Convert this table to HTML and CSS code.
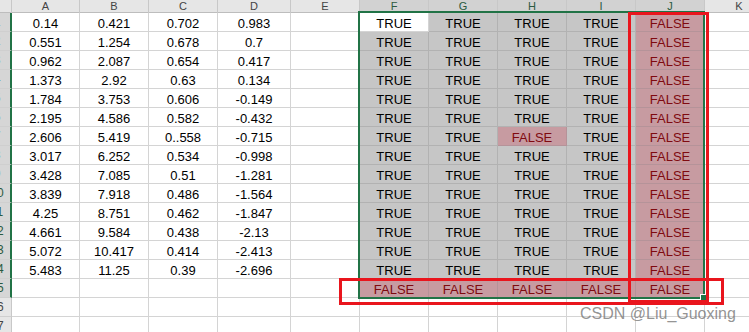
FILE: index.html
```html
<!DOCTYPE html>
<html>
<head>
<meta charset="utf-8">
<link rel="stylesheet" href="styles.css">
</head>
<body>
<div class="wrap">
  <div class="row hdr"><div></div><div>A</div><div>B</div><div>C</div><div>D</div><div>E</div><div class="hs">F</div><div class="hs">G</div><div class="hs">H</div><div class="hs">I</div><div class="hs">J</div><div>K</div></div>
  <div class="row"><div class="rh rs"><span>1</span></div><div>0.14</div><div>0.421</div><div>0.702</div><div>0.983</div><div></div><div class="a">TRUE</div><div class="g">TRUE</div><div class="g">TRUE</div><div class="g">TRUE</div><div class="p">FALSE</div><div></div></div>
  <div class="row"><div class="rh rs"><span>2</span></div><div>0.551</div><div>1.254</div><div>0.678</div><div>0.7</div><div></div><div class="g">TRUE</div><div class="g">TRUE</div><div class="g">TRUE</div><div class="g">TRUE</div><div class="p">FALSE</div><div></div></div>
  <div class="row"><div class="rh rs"><span>3</span></div><div>0.962</div><div>2.087</div><div>0.654</div><div>0.417</div><div></div><div class="g">TRUE</div><div class="g">TRUE</div><div class="g">TRUE</div><div class="g">TRUE</div><div class="p">FALSE</div><div></div></div>
  <div class="row"><div class="rh rs"><span>4</span></div><div>1.373</div><div>2.92</div><div>0.63</div><div>0.134</div><div></div><div class="g">TRUE</div><div class="g">TRUE</div><div class="g">TRUE</div><div class="g">TRUE</div><div class="p">FALSE</div><div></div></div>
  <div class="row"><div class="rh rs"><span>5</span></div><div>1.784</div><div>3.753</div><div>0.606</div><div>-0.149</div><div></div><div class="g">TRUE</div><div class="g">TRUE</div><div class="g">TRUE</div><div class="g">TRUE</div><div class="p">FALSE</div><div></div></div>
  <div class="row"><div class="rh rs"><span>6</span></div><div>2.195</div><div>4.586</div><div>0.582</div><div>-0.432</div><div></div><div class="g">TRUE</div><div class="g">TRUE</div><div class="g">TRUE</div><div class="g">TRUE</div><div class="p">FALSE</div><div></div></div>
  <div class="row"><div class="rh rs"><span>7</span></div><div>2.606</div><div>5.419</div><div>0..558</div><div>-0.715</div><div></div><div class="g">TRUE</div><div class="g">TRUE</div><div class="p">FALSE</div><div class="g">TRUE</div><div class="p">FALSE</div><div></div></div>
  <div class="row"><div class="rh rs"><span>8</span></div><div>3.017</div><div>6.252</div><div>0.534</div><div>-0.998</div><div></div><div class="g">TRUE</div><div class="g">TRUE</div><div class="g">TRUE</div><div class="g">TRUE</div><div class="p">FALSE</div><div></div></div>
  <div class="row"><div class="rh rs"><span>9</span></div><div>3.428</div><div>7.085</div><div>0.51</div><div>-1.281</div><div></div><div class="g">TRUE</div><div class="g">TRUE</div><div class="g">TRUE</div><div class="g">TRUE</div><div class="p">FALSE</div><div></div></div>
  <div class="row"><div class="rh rs"><span>10</span></div><div>3.839</div><div>7.918</div><div>0.486</div><div>-1.564</div><div></div><div class="g">TRUE</div><div class="g">TRUE</div><div class="g">TRUE</div><div class="g">TRUE</div><div class="p">FALSE</div><div></div></div>
  <div class="row"><div class="rh rs"><span>11</span></div><div>4.25</div><div>8.751</div><div>0.462</div><div>-1.847</div><div></div><div class="g">TRUE</div><div class="g">TRUE</div><div class="g">TRUE</div><div class="g">TRUE</div><div class="p">FALSE</div><div></div></div>
  <div class="row"><div class="rh rs"><span>12</span></div><div>4.661</div><div>9.584</div><div>0.438</div><div>-2.13</div><div></div><div class="g">TRUE</div><div class="g">TRUE</div><div class="g">TRUE</div><div class="g">TRUE</div><div class="p">FALSE</div><div></div></div>
  <div class="row"><div class="rh rs"><span>13</span></div><div>5.072</div><div>10.417</div><div>0.414</div><div>-2.413</div><div></div><div class="g">TRUE</div><div class="g">TRUE</div><div class="g">TRUE</div><div class="g">TRUE</div><div class="p">FALSE</div><div></div></div>
  <div class="row"><div class="rh rs"><span>14</span></div><div>5.483</div><div>11.25</div><div>0.39</div><div>-2.696</div><div></div><div class="g">TRUE</div><div class="g">TRUE</div><div class="g">TRUE</div><div class="g">TRUE</div><div class="p">FALSE</div><div></div></div>
  <div class="row"><div class="rh rs"><span>15</span></div><div></div><div></div><div></div><div></div><div></div><div class="p">FALSE</div><div class="p">FALSE</div><div class="p">FALSE</div><div class="p">FALSE</div><div class="p">FALSE</div><div></div></div>
  <div class="row"><div class="rh"><span>16</span></div><div></div><div></div><div></div><div></div><div></div><div></div><div></div><div></div><div></div><div></div><div></div></div>
  <div class="row"><div class="rh"><span>17</span></div><div></div><div></div><div></div><div></div><div></div><div></div><div></div><div></div><div></div><div></div><div></div></div>

  <div class="selbox"></div>
  <div class="handle"></div>
  <div class="mark mark-col"></div>
  <div class="mark mark-row"></div>
  <div class="wm">CSDN @Liu_Guoxing</div>
</div>
</body>
</html>
```
FILE: styles.css
```css
* { box-sizing: border-box; margin: 0; padding: 0; }
html, body { margin: 0; width: 749px; height: 332px; overflow: hidden; background: #fff; }
body { font-family: "Liberation Sans", Arial, sans-serif; }
.wrap { position: relative; width: 780px; }
.row {
  display: grid;
  grid-template-columns: 12px 68px 69px 69px 73px 69px 69px 69px 69px 69px 69px 69px;
  height: 19px;
}
.row > div {
  border-right: 1px solid #d4d4d4;
  border-bottom: 1px solid #d4d4d4;
  font-size: 13px;
  line-height: 17px;
  padding-top: 2px;
  text-align: center;
  white-space: nowrap;
  overflow: hidden;
  color: #000;
}
.hdr { height: 13px; }
.hdr > div {
  background: #e6e6e6;
  border-right-color: #c8c8c8;
  border-bottom: 0;
  box-shadow: inset 0 -1px 0 #bdbdbd;
  color: #444;
  font-size: 11px;
  line-height: 12px;
  padding-top: 0;
  overflow: visible;
}
.hdr > .hs {
  background: #d2d2d2;
  box-shadow: inset 0 -2px 0 #217346;
  color: #2b5a40;
}
.row > .rh {
  background: #e6e6e6;
  border-right-color: #c8c8c8;
  border-bottom-color: #cfcfcf;
  font-size: 12px;
  line-height: 18px;
  padding-top: 0;
  color: #444;
}
.rh span { display: block; width: 26px; margin-left: -16px; text-align: center; }
.row > .rs { background: #d6d6d6; border-right: 2px solid #217346; color: #2b5a40; }
.row > .g { background: #c6c6c6; border-color: #b2b2b2; }
.row > .p { background: #c79ba1; border-color: #b59399; color: #7f0a10; }
.selbox {
  position: absolute;
  left: 358px; top: 11px;
  width: 347px; height: 288px;
  border: 2px solid #217346;
}
.handle {
  position: absolute;
  left: 700px; top: 294px;
  width: 7px; height: 7px;
  background: #217346;
  border: 1px solid #fff;
}
.mark { position: absolute; border: 3px solid #e9151d; }
.mark-col { left: 628px; top: 12px; width: 81px; height: 291px; }
.mark-row { left: 339px; top: 278px; width: 385px; height: 27px; }
.wm {
  position: absolute;
  left: 580px; top: 306px;
  font-size: 16px;
  line-height: 16px;
  color: rgba(120, 120, 120, 0.8);
  white-space: nowrap;
}
```
